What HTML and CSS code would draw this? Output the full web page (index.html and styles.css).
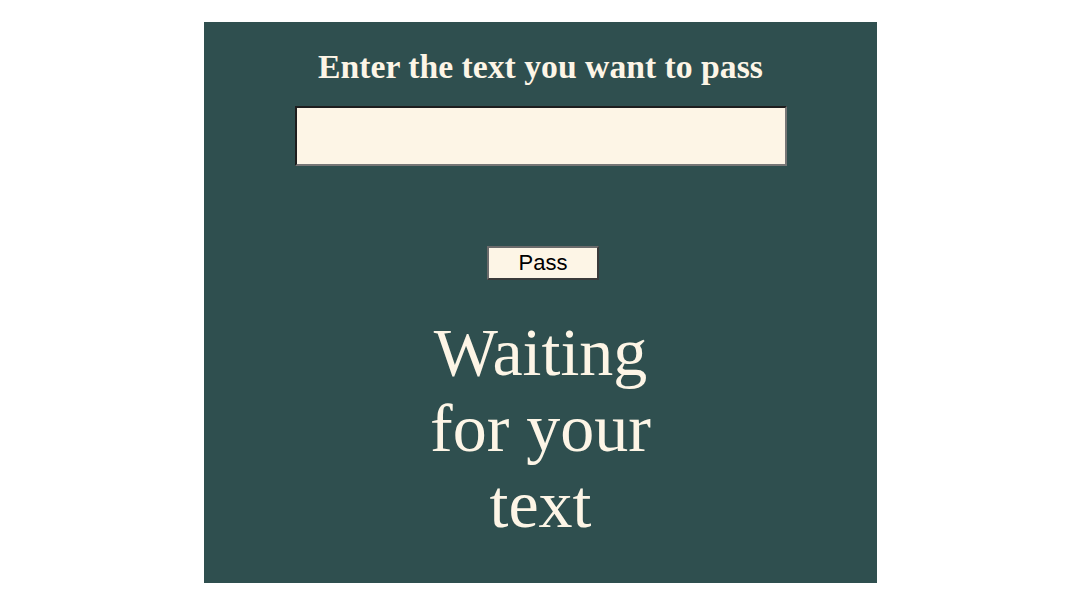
FILE: index.html
```html
<!DOCTYPE html>
<html>
<head>
<meta charset="utf-8">
<link rel="stylesheet" href="styles.css">
</head>
<body>
<main class="panel">
  <h2 class="title">Enter the text you want to pass</h2>
  <input class="field" type="text">
  <button class="pass">Pass</button>
  <p class="result">Waiting for your text</p>
</main>
</body>
</html>
```
FILE: styles.css
```css
html, body {
  margin: 0;
  padding: 0;
  background: #ffffff;
}
.panel {
  width: 673px;
  height: 561px;
  margin: 22px auto 0;
  background: #2f4f4f;
  box-sizing: border-box;
  padding-top: 25px;
  display: flex;
  flex-direction: column;
  align-items: center;
  font-family: "Liberation Serif", serif;
  color: #fdf5e6;
}
.title {
  margin: 0;
  font-size: 33.7px;
  font-weight: bold;
  line-height: 39px;
}
.field {
  margin-top: 20px;
  width: 492px;
  height: 60px;
  box-sizing: border-box;
  background: #fdf5e6;
  border-style: solid;
  border-width: 2px;
  border-color: #1e1e1e #767676 #767676 #1e1e1e;
  padding: 0 4px;
}
.pass {
  margin-top: 80px;
  margin-left: 5px;
  width: 112px;
  height: 34px;
  box-sizing: border-box;
  background: #fdf5e6;
  border: 2px solid;
  border-color: #6b6b6b #3a3a3a #3a3a3a #6b6b6b;
  font-family: "Liberation Sans", Arial, sans-serif;
  font-size: 22px;
  color: #000;
  padding: 0;
}
.result {
  margin: 34px 0 0;
  width: 260px;
  text-align: center;
  font-size: 68px;
  line-height: 76px;
}
```
